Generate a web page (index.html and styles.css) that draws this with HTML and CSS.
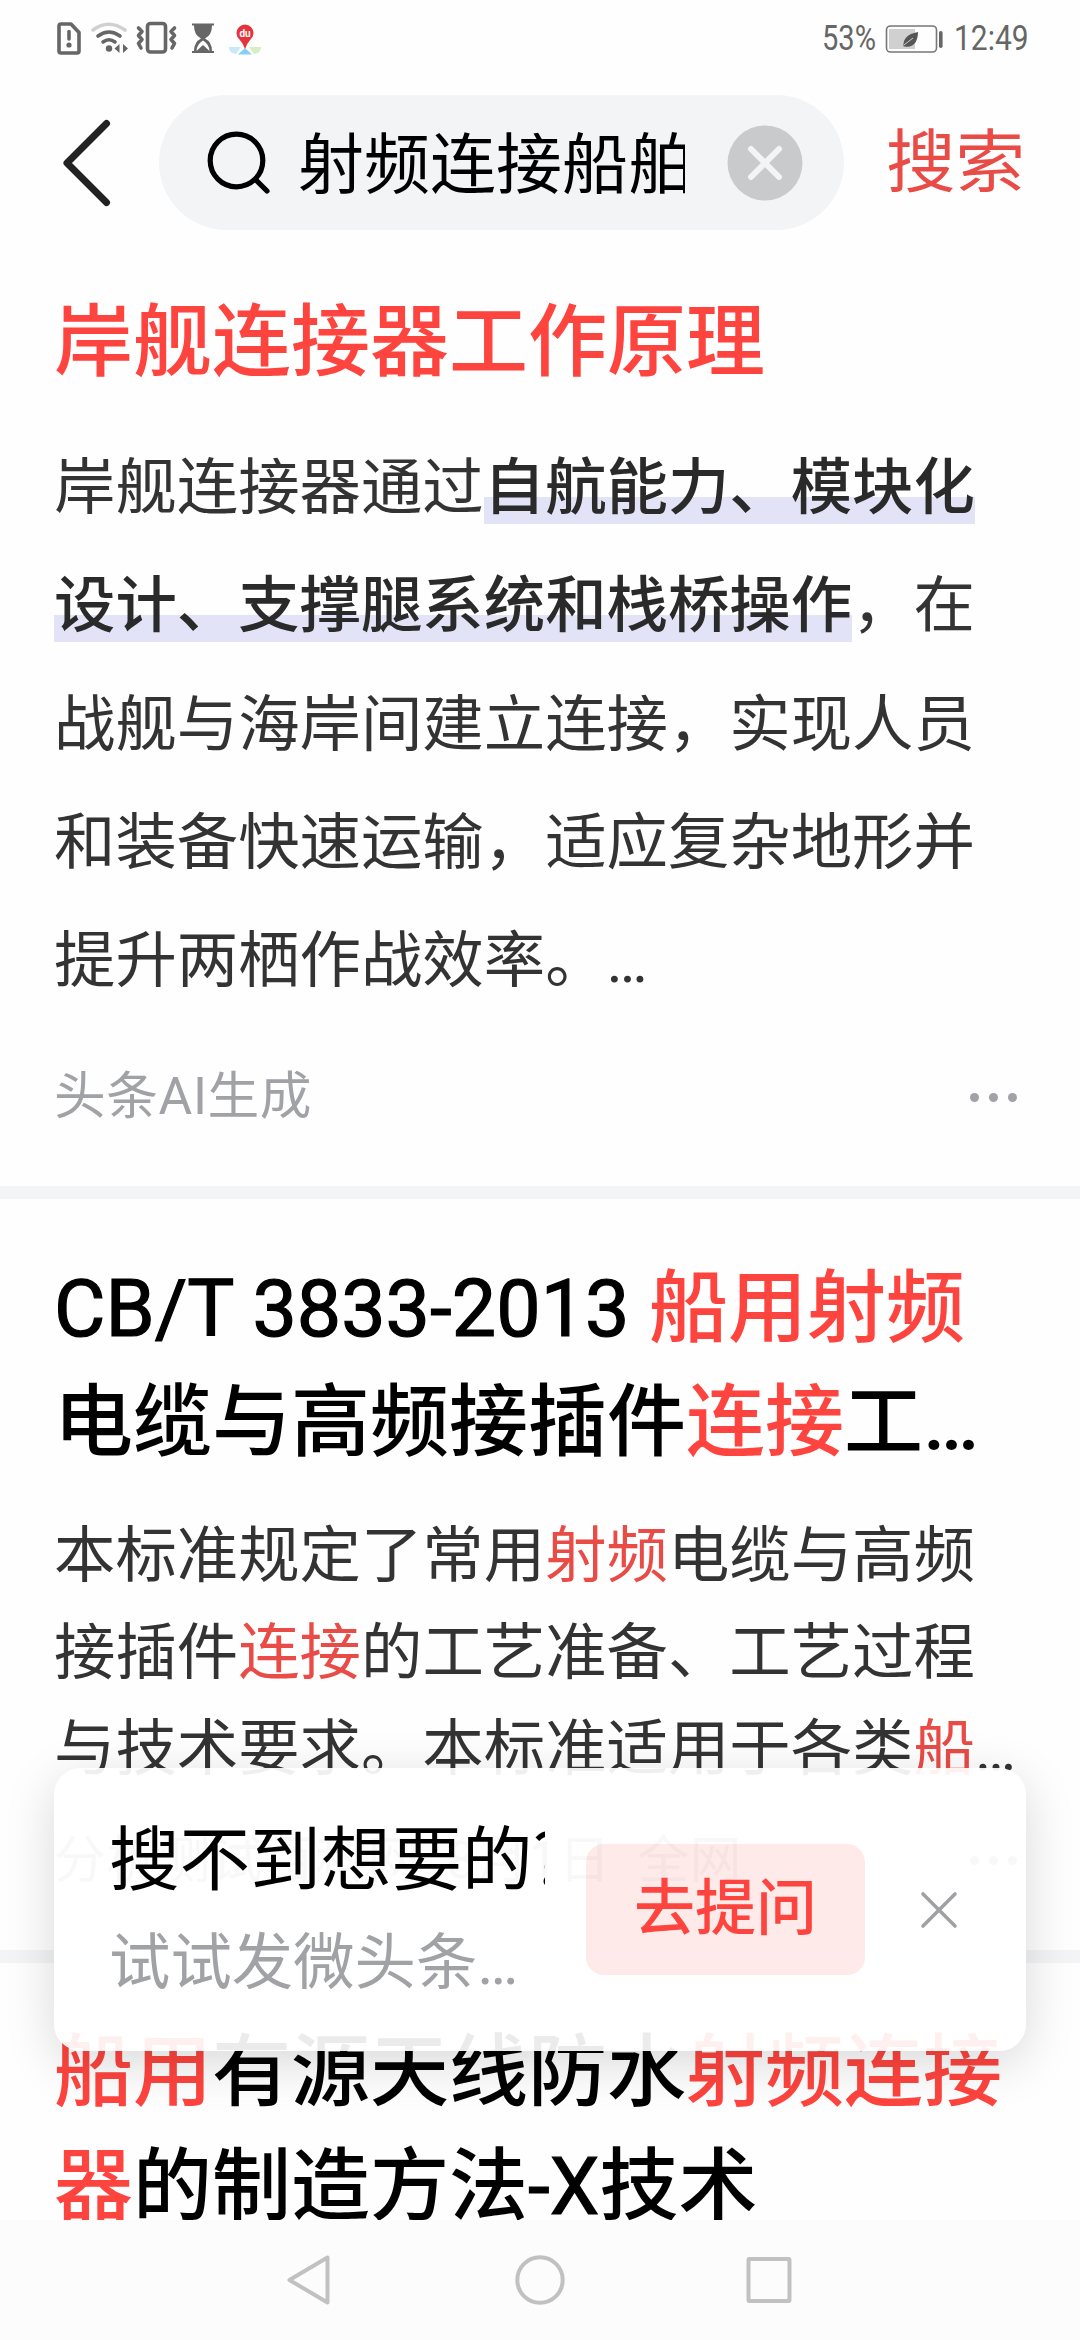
FILE: index.html
```html
<!DOCTYPE html>
<html lang="zh-CN">
<head>
    <meta charset="UTF-8">
    <meta name="viewport" content="width=device-width, initial-scale=1.0">
    <title>搜索</title>
    <link rel="stylesheet" href="styles.css">
</head>
<body>
    <div class="screen">
        <div class="status-bar">
            <svg class="status-icons" width="220" height="40" viewBox="54 16 220 40" fill="none" stroke="#666" stroke-width="3.6" stroke-linecap="round" stroke-linejoin="round">
                <!-- sim card -->
                <path d="M61 24H71L79 32.500V51Q79 53 77 53H61Q59 53 59 51V26Q59 24 61 24Z"/>
                <path d="M69 31.500V39"/>
                <circle cx="69" cy="45" r="2.600" fill="#666" stroke="none"/>
                <!-- wifi -->
                <path d="M93 30Q108.500 18.500 125 30" stroke="#d0d0d0"/>
                <path d="M98 36Q109 28 120 36"/>
                <path d="M103 42Q109 37.500 115 42"/>
                <circle cx="109" cy="48.500" r="3.200" fill="#666" stroke="none"/>
                <path d="M119.500 44V53L114.500 48.500ZM123 44V53L128 48.500Z" fill="#666" stroke="none"/>
                <!-- vibrate -->
                <rect x="147.500" y="23.500" width="18" height="28.500" rx="3"/>
                <path d="M138.500 28L142 31.500L138.500 35.500L142 39.500L138.500 43.500L141 48M174.500 28L171 31.500L174.500 35.500L171 39.500L174.500 43.500L172 48"/>
                <!-- hourglass -->
                <path d="M192 23.500H214V25.500H212Q212 35 205 38.500Q212 42 212 51H214V53H192V51H194Q194 42 201 38.500Q194 35 194 25.500H192Z" fill="#666" stroke="none"/>
                <path d="M196.500 51Q197 44 203 40.500Q209 44 209.500 51L203 45Z" fill="#fff" stroke="none"/>
                <!-- map pin -->
                <g stroke="none">
                    <path d="M229 47H241L236 54Q229 53 229 48Z" fill="#c9e9f8"/>
                    <path d="M249 47H261Q261 53 254 54Z" fill="#d5f0c0"/>
                    <path d="M238 54.500L245 48L252 54.500Z" fill="#86d0f3"/>
                    <path d="M245 49Q243.500 44 239.500 39.500A8.500 8.500 0 1 1 250.500 39.500Q246.500 44 245 49Z" fill="#e6323a"/>
                    <text x="245" y="37" class="pin-text">du</text>
                </g>
            </svg>
            <div class="status-right">
                <span class="status-text percent">53%</span>
                <svg class="battery" width="60" height="30" viewBox="0 0 60 30">
                    <rect x="1.500" y="2" width="50" height="26" rx="4" fill="none" stroke="#777" stroke-width="1.600"/>
                    <rect x="4" y="5" width="26" height="20" fill="#d0d0d0"/>
                    <rect x="54" y="7" width="3.600" height="17" rx="1.800" fill="#666"/>
                    <path d="M18.500 22.500C18 15 22 10 33 8C33 17 29 24 20 22.500Z" fill="#555"/>
                    <path d="M19 21Q24 17 28 14" stroke="#d0d0d0" stroke-width="1" fill="none"/>
                </svg>
                <span class="status-text clock">12:49</span>
            </div>
        </div>

        <div class="search-bar">
            <svg class="back" width="60" height="100" viewBox="0 0 60 100">
                <path d="M50.500 10.500L11 50L50.500 89.500" fill="none" stroke="#222" stroke-width="7" stroke-linecap="round" stroke-linejoin="round"/>
            </svg>
            <div class="search-box">
                <svg class="search-icon" width="70" height="70" viewBox="0 0 70 70" fill="none" stroke="#000" stroke-width="5.200" stroke-linecap="round">
                    <circle cx="32.500" cy="32.500" r="26.300"/>
                    <path d="M51.500 51.500L63 63"/>
                </svg>
                <div class="search-input">射频连接船舶</div>
                <svg class="clear" width="76" height="76" viewBox="0 0 76 76">
                    <circle cx="38" cy="38" r="37.500" fill="#c9cacc"/>
                    <path d="M24 24L52 52M52 24L24 52" stroke="#f3f4f6" stroke-width="6" stroke-linecap="round"/>
                </svg>
            </div>
            <span class="search-btn">搜索</span>
        </div>

        <div class="results">
            <div class="card card-ai">
                <h2 class="title hl">岸舰连接器工作原理</h2>
                <p class="answer">岸舰连接器通过<b class="mark">自航能力、模块化<br>设计、支撑腿系统和栈桥操作</b>，在<br>战舰与海岸间建立连接，实现人员<br>和装备快速运输，适应复杂地形并<br>提升两栖作战效率。…</p>
                <div class="meta">
                    <span>头条AI生成</span>
                    <span class="dots"><i></i><i></i><i></i></span>
                </div>
            </div>

            <div class="card card-std">
                <h2 class="title"><span class="latin">CB/T 3833-2013 </span><em>船用射频</em><br>电缆与高频接插件<em>连接</em>工…</h2>
                <p class="summary">本标准规定了常用<em>射频</em>电缆与高频<br>接插件<em>连接</em>的工艺准备、工艺过程<br>与技术要求。本标准适用于各类<em>船</em>…</p>
                <div class="meta">
                    <span>分析测试百科网&nbsp; 8月1日&nbsp; 全网</span>
                    <span class="dots"><i></i><i></i><i></i></span>
                </div>
            </div>

            <div class="card">
                <h2 class="title"><em>船用</em>有源天线防水<em>射频连接</em><br><em>器</em>的制造方法<span class="latin">-X</span>技术</h2>
            </div>
        </div>

        <div class="ask-popup">
            <div class="ask-text">
                <div class="ask-title">搜不到想要的<span class="ask-mark">?</span></div>
                <div class="ask-sub">试试发微头条…</div>
            </div>
            <div class="ask-btn">去提问</div>
            <svg class="ask-close" width="38" height="38" viewBox="0 0 38 38">
                <path d="M3 3L35 35M35 3L3 35" stroke="#a0a1a5" stroke-width="3.600" stroke-linecap="round"/>
            </svg>
        </div>

        <div class="nav-bar">
            <svg width="1080" height="120" viewBox="0 0 1080 120" fill="none" stroke="#c1c1c1" stroke-width="4" stroke-linejoin="round">
                <path d="M327.500 37.500V82.500L289.500 60Z"/>
                <circle cx="540" cy="60" r="22.700"/>
                <rect x="748.500" y="39" width="41" height="42" rx="1"/>
            </svg>
        </div>
    </div>
</body>
</html>
```
FILE: styles.css
```css
* {
    box-sizing: border-box;
}

body {
    margin: 0;
    background: #fefefe;
    font-family: Roboto, "Noto Sans CJK SC", sans-serif;
    color: #000;
}

.screen {
    position: relative;
    display: flex;
    flex-direction: column;
    width: 1080px;
    height: 2340px;
    overflow: hidden;
    white-space: nowrap;
}

svg {
    display: block;
    flex: none;
}

em {
    font-style: normal;
    color: #fe443e;
}

/* status bar */
.status-bar {
    display: flex;
    justify-content: space-between;
    flex: none;
    height: 95px;
    padding: 16px 53px 0 54px;
}

.status-right {
    display: flex;
    height: 45px;
    align-items: center;
}

.status-text {
    font-size: 35px;
    line-height: 45px;
    color: #666;
    transform: scaleX(0.83);
}

.percent {
    width: 54px;
    transform-origin: left;
}

.clock {
    width: 73px;
    transform: scaleX(0.855);
    transform-origin: left;
}

.battery {
    margin: 0 9px 0 9px;
}

.pin-text {
    font-size: 10px;
    font-weight: 700;
    fill: #fff;
    text-anchor: middle;
}

/* search bar */
.search-bar {
    display: flex;
    align-items: center;
    flex: none;
    height: 135px;
    padding-left: 56px;
}

.search-box {
    display: flex;
    align-items: center;
    width: 685px;
    height: 135px;
    margin-left: 43px;
    padding-left: 45px;
    border-radius: 68px;
    background: #f3f4f6;
}

.search-input {
    width: 387px;
    margin: 7px 42px 0 24px;
    overflow: hidden;
    font-size: 66px;
    line-height: 90px;
}

.search-btn {
    margin: 2px 0 0 42px;
    font-size: 69.5px;
    line-height: 90px;
    color: #e94b46;
}

/* results */
.results {
    flex: 1;
    min-height: 0;
    overflow: hidden;
}

.card {
    padding: 53px 54px 0;
    border-bottom: 13px solid #f3f4f6;
}

.card-ai {
    height: 969px;
    padding-top: 56px;
}

.card-std {
    height: 764px;
}

.title {
    margin: 0;
    font-size: 79px;
    line-height: 114px;
    font-weight: 500;
}

.latin {
    font-weight: 400;
    -webkit-text-stroke: 1.2px #000;
}

.hl {
    color: #fe443e;
}

.answer {
    margin: 29px 0 0;
    font-size: 61.4px;
    line-height: 118.3px;
    color: #333;
}

.mark {
    font-weight: 500;
    color: #2a2a2a;
    background: linear-gradient(#e3e3f7, #e3e3f7) 0 100% / 100% 27px no-repeat;
}

.summary {
    margin: 28px 0 0;
    font-size: 61.4px;
    line-height: 96.5px;
    color: #333;
}

.summary em {
    color: #e94b46;
}

.meta {
    display: flex;
    align-items: center;
    justify-content: space-between;
    margin-top: 41px;
    padding-right: 9px;
    font-size: 51.7px;
    line-height: 72px;
    letter-spacing: 0.6px;
    color: #a1a2a6;
}

.card-std .meta {
    margin-top: 27px;
}

.dots {
    display: flex;
    gap: 10px;
}

.dots i {
    width: 9px;
    height: 9px;
    border-radius: 50%;
    background: #a1a2a6;
}

/* floating ask popup */
.ask-popup {
    position: absolute;
    left: 54px;
    top: 1768px;
    display: flex;
    align-items: center;
    width: 972px;
    height: 283px;
    padding-left: 55px;
    border-radius: 27px;
    background: rgba(255, 255, 255, 0.92);
    box-shadow: 0 12px 50px rgba(0, 0, 0, 0.15);
}

.ask-text {
    width: 436px;
    overflow: hidden;
}

.ask-title {
    padding-top: 2px;
    font-size: 70.6px;
    line-height: 104px;
}

.ask-mark {
    font-family: "Noto Sans CJK SC", sans-serif;
    line-height: 1;
}

.ask-sub {
    font-size: 61.4px;
    line-height: 100px;
    color: #a1a2a6;
}

.ask-btn {
    width: 279px;
    height: 131px;
    margin-left: 41px;
    border-radius: 18px;
    background: rgba(255, 68, 62, 0.11);
    font-size: 61px;
    line-height: 131px;
    font-weight: 500;
    text-align: center;
    color: #fe443e;
}

.ask-close {
    margin-left: 55px;
}

.nav-bar {
    flex: none;
    height: 120px;
    background: #fcfcfc;
}
```
